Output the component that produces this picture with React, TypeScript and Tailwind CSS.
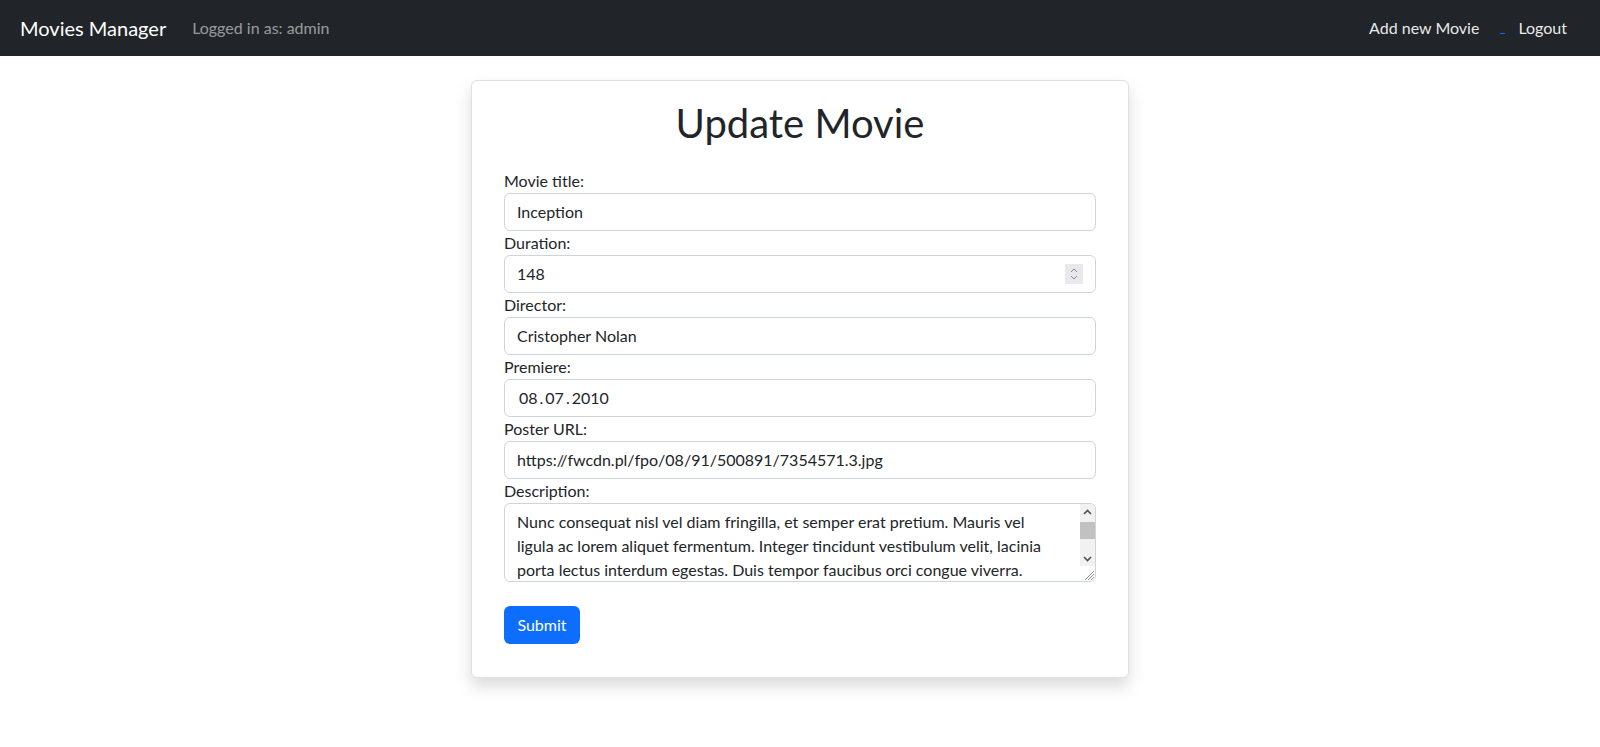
import React from "react";

function Label({ children }: { children: React.ReactNode }) {
  return <div className="h-6 text-base leading-6 text-[#212529]">{children}</div>;
}

function Field({ children }: { children: React.ReactNode }) {
  return (
    <div className="relative flex h-[38px] items-center rounded-md border border-[#ced4da] bg-white px-3 text-base text-[#212529]">
      {children}
    </div>
  );
}

export default function App() {
  return (
    <div className="min-h-[747px] bg-white font-['Lato',sans-serif] text-[#212529]">
      <nav className="flex h-14 items-center justify-between bg-[#212529] pl-5 pr-[33px]">
        <div className="flex items-center">
          <span className="text-xl leading-[30px] text-white">Movies Manager</span>
          <span className="ml-[26px] text-base text-[rgba(255,255,255,0.55)]">Logged in as: admin</span>
        </div>
        <div className="flex items-center text-base text-[rgba(255,255,255,0.92)]">
          <span>Add new Movie</span>
          <span className="ml-[21px] mt-[10px] h-px w-[5px] bg-[#0d6efd]" />
          <span className="ml-[13px]">Logout</span>
        </div>
      </nav>

      <div className="mx-auto mt-6 w-[658px] rounded-md border border-[#dee2e6] bg-white px-8 pb-[33px] pt-[18px] shadow-[0_8px_16px_rgba(0,0,0,0.15)]">
        <h1 className="mb-[22px] text-center text-[40px] leading-[48px] font-normal text-[#212529]">Update Movie</h1>

        <Label>Movie title:</Label>
        <Field>Inception</Field>

        <Label>Duration:</Label>
        <Field>
          <span>148</span>
          <div className="absolute right-3 top-[8px] flex h-5 w-[18px] flex-col items-center justify-center bg-[#e9e9ed]">
            <svg width="8" height="14" viewBox="0 0 8 14" fill="none" stroke="#8a8a8e" strokeWidth="1">
              <path d="M1 5 L4 2 L7 5" />
              <path d="M1 9 L4 12 L7 9" />
            </svg>
          </div>
        </Field>

        <Label>Director:</Label>
        <Field>Cristopher Nolan</Field>

        <Label>Premiere:</Label>
        <Field>
          <span className="ml-[2px] flex items-center gap-[2px]">
            <span>08</span>
            <span>.</span>
            <span>07</span>
            <span>.</span>
            <span>2010</span>
          </span>
        </Field>

        <Label>Poster URL:</Label>
        <Field>https://fwcdn.pl/fpo/08/91/500891/7354571.3.jpg</Field>

        <Label>Description:</Label>
        <div className="relative h-[79px] overflow-hidden rounded-md border border-[#ced4da] bg-white py-[6px] pl-3 pr-6 text-base leading-6 text-[#212529]">
          <div className="whitespace-nowrap">Nunc consequat nisl vel diam fringilla, et semper erat pretium. Mauris vel</div>
          <div className="whitespace-nowrap">ligula ac lorem aliquet fermentum. Integer tincidunt vestibulum velit, lacinia</div>
          <div className="whitespace-nowrap">porta lectus interdum egestas. Duis tempor faucibus orci congue viverra.</div>
          <div className="absolute right-0 top-0 flex h-[62px] w-[15px] flex-col items-center bg-[#f1f1f1]">
            <div className="flex h-[15px] w-full items-center justify-center">
              <svg width="9" height="6" viewBox="0 0 9 6" fill="none" stroke="#505050" strokeWidth="1.6">
                <path d="M1 5 L4.5 1.5 L8 5" />
              </svg>
            </div>
            <div className="mt-[3px] h-[17px] w-full bg-[#c1c1c1]" />
            <div className="flex-1" />
            <div className="flex h-[15px] w-full items-center justify-center">
              <svg width="9" height="6" viewBox="0 0 9 6" fill="none" stroke="#505050" strokeWidth="1.6">
                <path d="M1 1 L4.5 4.5 L8 1" />
              </svg>
            </div>
          </div>
          <div className="absolute bottom-0 right-0 flex h-[14px] w-[15px] items-end justify-end bg-white">
            <svg width="12" height="12" viewBox="0 0 12 12" stroke="#8a8a8a" strokeWidth="1">
              <path d="M11 2 L2 11" />
              <path d="M11 5 L5 11" />
              <path d="M11 8 L8 11" />
            </svg>
          </div>
        </div>

        <button className="mt-6 flex h-[38px] w-[76px] items-center justify-center rounded-md bg-[#0d6efd] text-base text-white">
          Submit
        </button>
      </div>
    </div>
  );
}
